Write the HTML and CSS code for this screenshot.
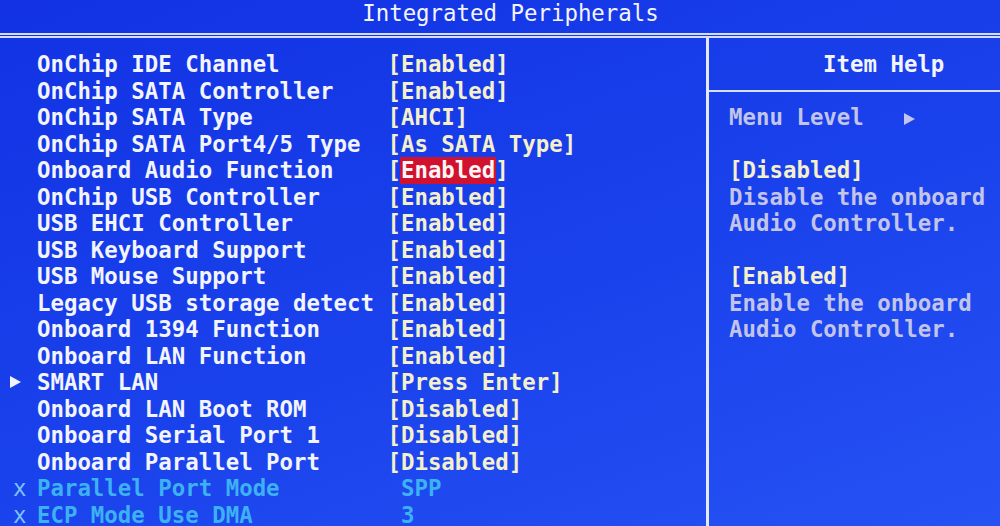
FILE: index.html
```html
<!DOCTYPE html>
<html lang="en">
<head>
	<meta charset="UTF-8">
	<title>Integrated Peripherals</title>
	<link rel="stylesheet" href="styles.css">
</head>
<body>
	<div class="screen">
		<div class="title">Integrated Peripherals</div>
		<div class="double-rule"></div>
		<div class="main">
			<ul class="items">
				<li><span class="mark"></span><span class="label">OnChip IDE Channel</span><span class="value">[Enabled]</span></li>
				<li><span class="mark"></span><span class="label">OnChip SATA Controller</span><span class="value">[Enabled]</span></li>
				<li><span class="mark"></span><span class="label">OnChip SATA Type</span><span class="value">[AHCI]</span></li>
				<li><span class="mark"></span><span class="label">OnChip SATA Port4/5 Type</span><span class="value">[As SATA Type]</span></li>
				<li><span class="mark"></span><span class="label">Onboard Audio Function</span><span class="value">[<span class="hl">Enabled</span>]</span></li>
				<li><span class="mark"></span><span class="label">OnChip USB Controller</span><span class="value">[Enabled]</span></li>
				<li><span class="mark"></span><span class="label">USB EHCI Controller</span><span class="value">[Enabled]</span></li>
				<li><span class="mark"></span><span class="label">USB Keyboard Support</span><span class="value">[Enabled]</span></li>
				<li><span class="mark"></span><span class="label">USB Mouse Support</span><span class="value">[Enabled]</span></li>
				<li><span class="mark"></span><span class="label">Legacy USB storage detect</span><span class="value">[Enabled]</span></li>
				<li><span class="mark"></span><span class="label">Onboard 1394 Function</span><span class="value">[Enabled]</span></li>
				<li><span class="mark"></span><span class="label">Onboard LAN Function</span><span class="value">[Enabled]</span></li>
				<li><span class="mark"><span class="tri"></span></span><span class="label">SMART LAN</span><span class="value">[Press Enter]</span></li>
				<li><span class="mark"></span><span class="label">Onboard LAN Boot ROM</span><span class="value">[Disabled]</span></li>
				<li><span class="mark"></span><span class="label">Onboard Serial Port 1</span><span class="value">[Disabled]</span></li>
				<li><span class="mark"></span><span class="label">Onboard Parallel Port</span><span class="value">[Disabled]</span></li>
				<li class="off"><span class="mark">x</span><span class="label">Parallel Port Mode</span><span class="value"> SPP</span></li>
				<li class="off"><span class="mark">x</span><span class="label">ECP Mode Use DMA</span><span class="value"> 3</span></li>
			</ul>
			<div class="help">
				<div class="help-title">Item Help</div>
				<div class="help-rule"></div>
				<div class="help-body">
					<p class="dim">Menu Level   <span class="tri"></span></p>
					<p></p>
					<p>[Disabled]</p>
					<p class="dim">Disable the onboard</p>
					<p class="dim">Audio Controller.</p>
					<p></p>
					<p>[Enabled]</p>
					<p class="dim">Enable the onboard</p>
					<p class="dim">Audio Controller.</p>
				</div>
			</div>
		</div>
	</div>
</body>
</html>
```

FILE: styles.css
```css
* {
	margin: 0;
	padding: 0;
	box-sizing: border-box;
}
li {
	list-style: none;
}
html, body {
	width: 1000px;
	height: 526px;
	overflow: hidden;
}
body {
	background: linear-gradient(160deg, #1232e4 0%, #1a42ec 55%, #2652f4 100%);
	font-family: "DejaVu Sans Mono", "Liberation Mono", monospace;
	font-size: 22.4px;
	font-weight: bold;
	color: #f2f4ff;
}
.screen {
	height: 526px;
	display: flex;
	flex-direction: column;
}
/* title bar */
.title {
	height: 33px;
	line-height: 26px;
	padding-left: 21px;
	text-align: center;
	font-weight: normal;
	color: #f4f4ff;
	white-space: pre;
}
.double-rule {
	height: 5px;
	border-top: 2px solid #d6defc;
	border-bottom: 2px solid #d6defc;
}
.main {
	flex: 1;
	display: flex;
	min-height: 0;
}
/* setup items */
.items {
	width: 706px;
	flex: none;
	padding: 13px 0 0 10px;
}
.items li {
	height: 26.5px;
	line-height: 26.5px;
	display: flex;
	white-space: pre;
}
.mark {
	width: 2ch;
	flex: none;
	display: flex;
	align-items: center;
}
.label {
	width: 26ch;
	flex: none;
}
.value {
	color: #f5f0cc;
}
.hl {
	background: #d0122e;
	color: #fff4f6;
	display: inline-block;
	padding: 0 1px;
	margin: 0 -1px;
}
.items li.off .mark {
	color: #7cc2f6;
	font-weight: normal;
	padding-left: 3px;
}
.items li.off .label, .items li.off .value {
	color: #3cb2f2;
}
.tri {
	display: inline-block;
	width: 0;
	height: 0;
	border-top: 6px solid transparent;
	border-bottom: 6px solid transparent;
	border-left: 11px solid #f2f4ff;
	vertical-align: middle;
}
/* item help */
.help {
	flex: 1;
	min-width: 0;
	border-left: 3px solid #e4e9ff;
	padding-top: 13px;
}
.help-title {
	height: 26.5px;
	line-height: 26.5px;
	padding-left: 114px;
}
.help-rule {
	height: 2px;
	margin: 12px 0 12.5px;
	background: #d6defc;
}
.help-body {
	padding-left: 20px;
}
.help-body p {
	height: 26.5px;
	line-height: 26.5px;
	white-space: pre;
	color: #f5f0cc;
}
.help-body p.dim {
	color: #c2c4ea;
}
.help-body .tri {
	border-left-color: #c2c4ea;
}
```
